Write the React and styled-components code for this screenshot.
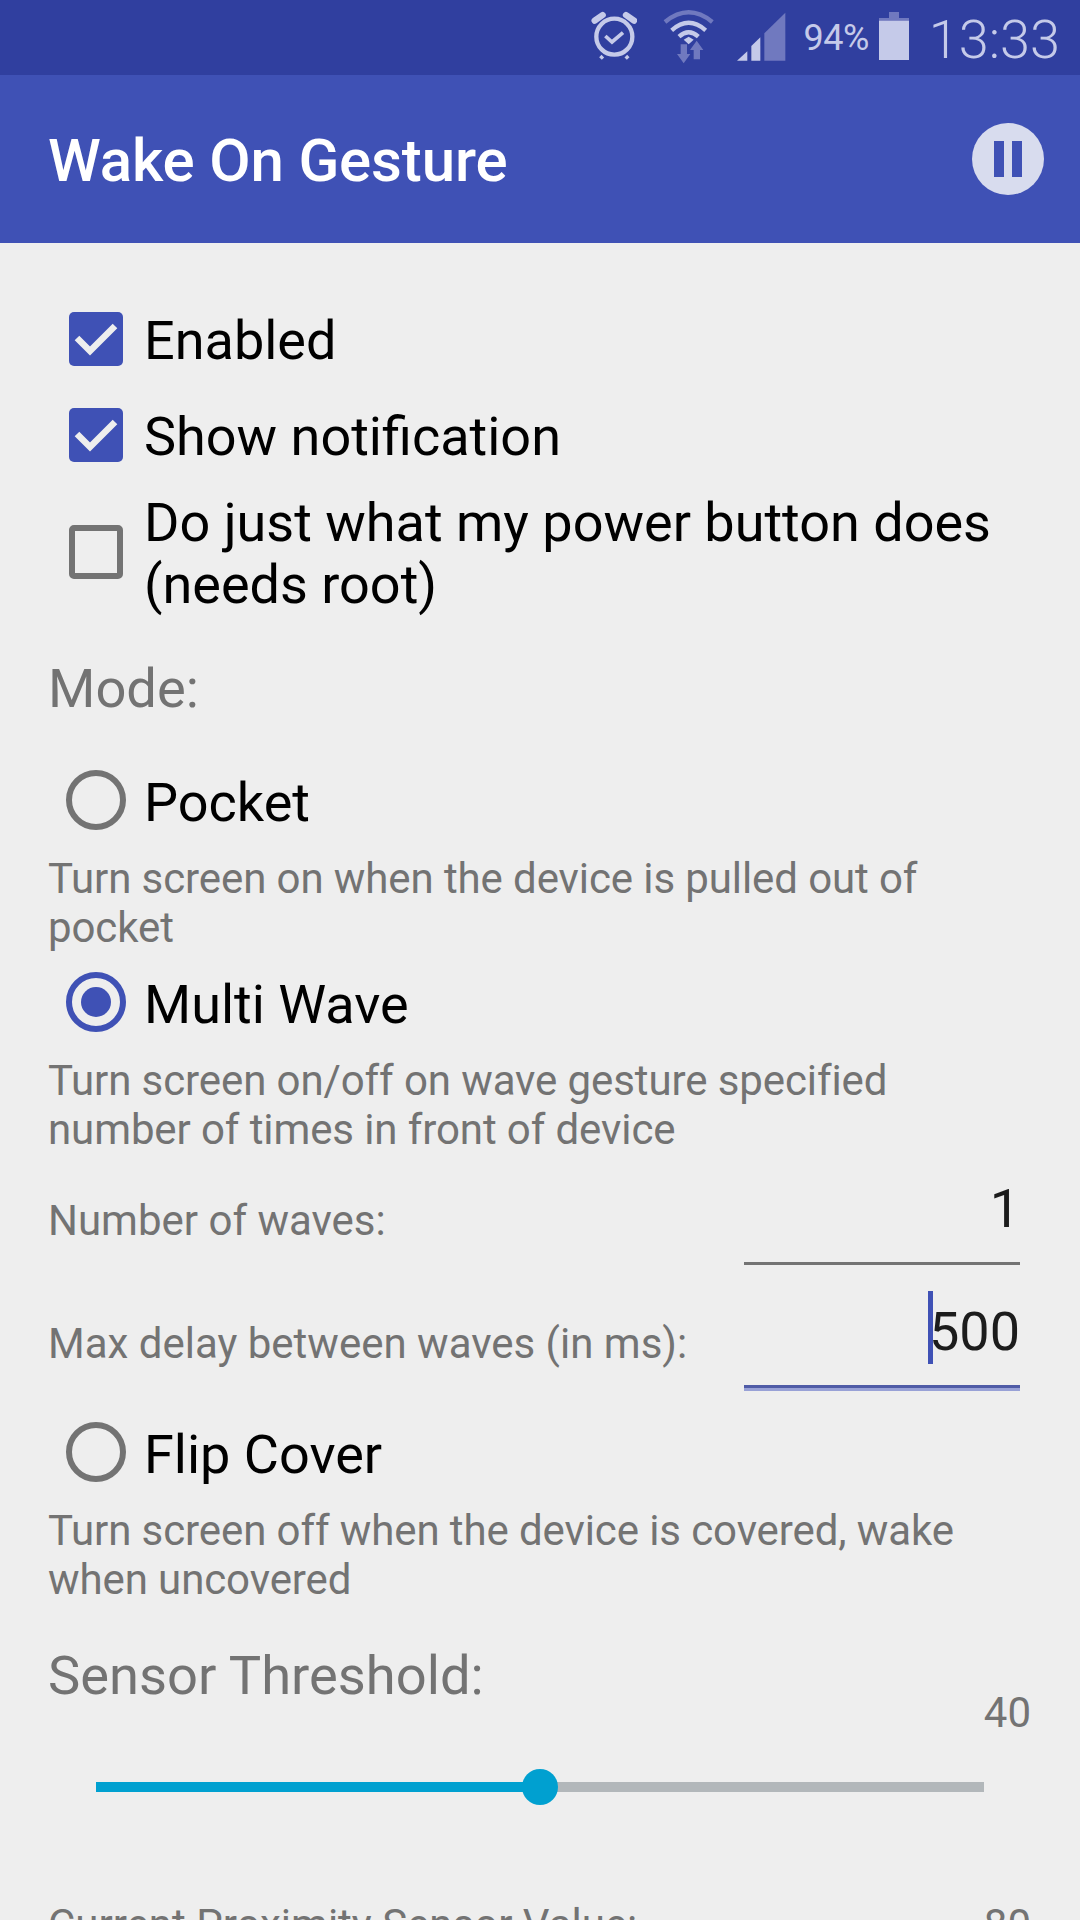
import React from "react";
import styled, { createGlobalStyle } from "styled-components";

const GlobalStyle = createGlobalStyle`
  html, body {
    margin: 0;
    padding: 0;
    background: #eeeeee;
  }
  body {
    font-family: Roboto, "Liberation Sans", sans-serif;
  }
`;

const BRIGHT = "#c5cae9";
const DIM = "#7079bf";
const GREY = "#737373";
const INDIGO = "#3f51b5";

const Screen = styled.div`
  width: 1080px;
  height: 1920px;
  overflow: hidden;
  background: #eeeeee;
`;

const StatusBar = styled.div`
  height: 75px;
  background: #303f9f;
  display: flex;
  align-items: center;
  justify-content: flex-end;
  padding-right: 20px;
  color: ${BRIGHT};
`;

const StatusIcon = styled.svg`
  display: block;
  flex: none;
  margin-left: ${(p) => p.$left || 0}px;
  margin-bottom: 3px;
`;

const Battery = styled.span`
  font-size: 36px;
  margin-left: 18px;
  margin-top: 1px;
  letter-spacing: -0.5px;
`;

const Clock = styled.span`
  font-size: 54px;
  font-weight: 300;
  margin-left: 20px;
  margin-top: 4px;
`;

const AppBar = styled.div`
  height: 168px;
  background: ${INDIGO};
  display: flex;
  align-items: center;
  justify-content: space-between;
  padding: 0 36px 0 48px;
`;

const Title = styled.h1`
  margin: 2px 0 0;
  font-size: 60px;
  font-weight: 500;
  letter-spacing: -0.15px;
  color: #ffffff;
`;

const PauseButton = styled.div`
  width: 72px;
  height: 72px;
  border-radius: 50%;
  background: #d8dcee;
  display: flex;
  align-items: center;
  justify-content: center;
  gap: 8px;
`;

const PauseBar = styled.span`
  width: 10px;
  height: 36px;
  background: ${INDIGO};
`;

const Content = styled.div`
  padding: 48px 60px 0 48px;
`;

const CheckRow = styled.div`
  display: flex;
  align-items: center;
  gap: 21px;
  margin-left: 21px;
  min-height: 96px;
  margin-top: ${(p) => p.$top || 0}px;
`;

const CheckBox = styled.div`
  width: 54px;
  height: 54px;
  flex: none;
  box-sizing: border-box;
  border-radius: 5px;
  background: ${(p) => (p.$checked ? INDIGO : "transparent")};
  border: ${(p) => (p.$checked ? "none" : `6px solid ${GREY}`)};
`;

const TickIcon = styled.svg`
  display: block;
`;

const OptionLabel = styled.div`
  font-size: 54px;
  line-height: 62px;
  color: #000000;
  margin-top: 4px;
`;

const SectionTitle = styled.div`
  font-size: 54.3px;
  line-height: 62px;
  color: ${GREY};
  margin-top: ${(p) => p.$top}px;
`;

const RadioRow = styled.div`
  display: flex;
  align-items: center;
  gap: 18px;
  height: 100px;
  margin-left: 18px;
  margin-top: ${(p) => p.$top || 0}px;
`;

const RadioCircle = styled.div`
  width: 60px;
  height: 60px;
  flex: none;
  box-sizing: border-box;
  border-radius: 50%;
  border: 6px solid ${(p) => (p.$checked ? INDIGO : GREY)};
  margin-bottom: 2px;
  display: flex;
  align-items: center;
  justify-content: center;
`;

const RadioDot = styled.span`
  width: 30px;
  height: 30px;
  border-radius: 50%;
  background: ${INDIGO};
`;

const Description = styled.div`
  font-size: 42px;
  line-height: 49px;
  letter-spacing: -0.1px;
  margin: 3px 0 1px;
  color: ${GREY};
`;

const FieldRow = styled.div`
  display: flex;
  align-items: center;
  justify-content: space-between;
  margin-top: ${(p) => p.$top}px;
`;

const FieldLabel = styled.div`
  font-size: 42px;
  line-height: 49px;
  color: ${GREY};
  margin-top: 8px;
`;

const FieldInput = styled.div`
  width: 276px;
  height: 98px;
  box-sizing: border-box;
  display: flex;
  align-items: center;
  justify-content: flex-end;
  font-size: 54px;
  color: #1c1c1c;
  border-bottom: 3px solid ${GREY};
  padding-bottom: 13px;
  ${(p) =>
    p.$focused &&
    `
    border-bottom: 3px solid #4f5ba6;
    box-shadow: 0 3px 0 #98a1d6;
  `}
`;

const Caret = styled.span`
  width: 5px;
  height: 73px;
  background: ${INDIGO};
  flex: none;
  margin: 0 -4px 8px 0;
`;

const SliderValue = styled.div`
  font-size: 42px;
  line-height: 49px;
  color: ${GREY};
  text-align: right;
  margin-right: -11px;
  margin-top: -19px;
`;

const SliderWrap = styled.div`
  position: relative;
  height: 10px;
  width: 888px;
  margin: 45px 0 0 48px;
  background: #b2b7ba;
`;

const SliderFill = styled.div`
  height: 100%;
  background: #00a0d0;
`;

const SliderThumb = styled.div`
  position: absolute;
  top: -13px;
  width: 36px;
  height: 36px;
  margin-left: -18px;
  border-radius: 50%;
  background: #00a0d0;
`;

const ReadingRow = styled.div`
  display: flex;
  justify-content: space-between;
  font-size: 42px;
  line-height: 49px;
  color: ${GREY};
  margin-top: 108px;
  margin-right: -11px;
`;

function Tick() {
  return (
    <TickIcon width="54" height="54" viewBox="0 0 54 54">
      <path d="M8 26 L21 39 L46 14" fill="none" stroke="#eeeeee" strokeWidth="6.5" />
    </TickIcon>
  );
}

function StatusIcons() {
  return (
    <>
      <StatusIcon width="46" height="50" viewBox="92 35 138 150">
        <circle cx="162" cy="112" r="54" fill="none" stroke={BRIGHT} strokeWidth="13" />
        <path d="M103 64 L127 47 M197 47 L221 64" stroke={BRIGHT} strokeWidth="19" strokeLinecap="round" />
        <path d="M120 170 L128 178 M204 170 L196 178" stroke={BRIGHT} strokeWidth="10" />
        <path d="M135 110 L155 128 L188 100" fill="none" stroke={BRIGHT} strokeWidth="11" />
      </StatusIcon>
      <StatusIcon $left={25} width="54" height="56" viewBox="308 20 160 168">
        <path d="M316 62 Q387 4 458 62" fill="none" stroke={DIM} strokeWidth="13" />
        <path d="M336 87 Q387 42 438 87" fill="none" stroke={BRIGHT} strokeWidth="13" />
        <path d="M358 106 Q387 80 416 106" fill="none" stroke={BRIGHT} strokeWidth="13" />
        <path d="M372 115 L387 106 L402 115 L387 129 Z" fill={BRIGHT} />
        <path d="M363 129 H382 V158 H392 L372 186 L352 158 H363 Z" fill={DIM} />
        <path d="M411 118 L431 146 H421 V174 H402 V146 H391 Z" fill={DIM} />
      </StatusIcon>
      <StatusIcon $left={21} width="49" height="49" viewBox="530 34 147 147">
        <path d="M530 180 L561 152 V180 Z" fill={BRIGHT} />
        <path d="M573 180 V136 L600 110 V180 Z" fill={BRIGHT} />
        <path d="M612 180 V98 L675 36 V180 Z" fill={DIM} />
      </StatusIcon>
      <Battery>94%</Battery>
      <StatusIcon $left={10} width="30" height="48" viewBox="954 34 90 144">
        <path d="M984 34 H1014 V52 H1044 V60 H954 V52 H984 Z" fill={DIM} />
        <rect x="954" y="60" width="90" height="118" fill={BRIGHT} />
      </StatusIcon>
    </>
  );
}

export default function App() {
  const threshold = 40;
  const thresholdMax = 80;
  const percent = `${(threshold / thresholdMax) * 100}%`;

  return (
    <>
      <GlobalStyle />
      <Screen>
        <StatusBar>
          <StatusIcons />
          <Clock>13:33</Clock>
        </StatusBar>
        <AppBar>
          <Title>Wake On Gesture</Title>
          <PauseButton>
            <PauseBar />
            <PauseBar />
          </PauseButton>
        </AppBar>
        <Content>
          <CheckRow>
            <CheckBox $checked>
              <Tick />
            </CheckBox>
            <OptionLabel>Enabled</OptionLabel>
          </CheckRow>
          <CheckRow>
            <CheckBox $checked>
              <Tick />
            </CheckBox>
            <OptionLabel>Show notification</OptionLabel>
          </CheckRow>
          <CheckRow $top={5}>
            <CheckBox />
            <OptionLabel>
              Do just what my power button does
              <br />
              (needs root)
            </OptionLabel>
          </CheckRow>

          <SectionTitle $top={42}>Mode:</SectionTitle>

          <RadioRow $top={31}>
            <RadioCircle />
            <OptionLabel>Pocket</OptionLabel>
          </RadioRow>
          <Description>
            Turn screen on when the device is pulled out of
            <br />
            pocket
          </Description>

          <RadioRow>
            <RadioCircle $checked>
              <RadioDot />
            </RadioCircle>
            <OptionLabel>Multi Wave</OptionLabel>
          </RadioRow>
          <Description>
            Turn screen on/off on wave gesture specified
            <br />
            number of times in front of device
          </Description>

          <FieldRow $top={13}>
            <FieldLabel>Number of waves:</FieldLabel>
            <FieldInput>1</FieldInput>
          </FieldRow>
          <FieldRow $top={25}>
            <FieldLabel>Max delay between waves (in ms):</FieldLabel>
            <FieldInput $focused>
              <Caret />
              500
            </FieldInput>
          </FieldRow>

          <RadioRow $top={15}>
            <RadioCircle />
            <OptionLabel>Flip Cover</OptionLabel>
          </RadioRow>
          <Description>
            Turn screen off when the device is covered, wake
            <br />
            when uncovered
          </Description>

          <SectionTitle $top={41}>Sensor Threshold:</SectionTitle>
          <SliderValue>{threshold}</SliderValue>
          <SliderWrap>
            <SliderFill style={{ width: percent }} />
            <SliderThumb style={{ left: percent }} />
          </SliderWrap>

          <ReadingRow>
            <span>Current Proximity Sensor Value:</span>
            <span>80</span>
          </ReadingRow>
        </Content>
      </Screen>
    </>
  );
}
